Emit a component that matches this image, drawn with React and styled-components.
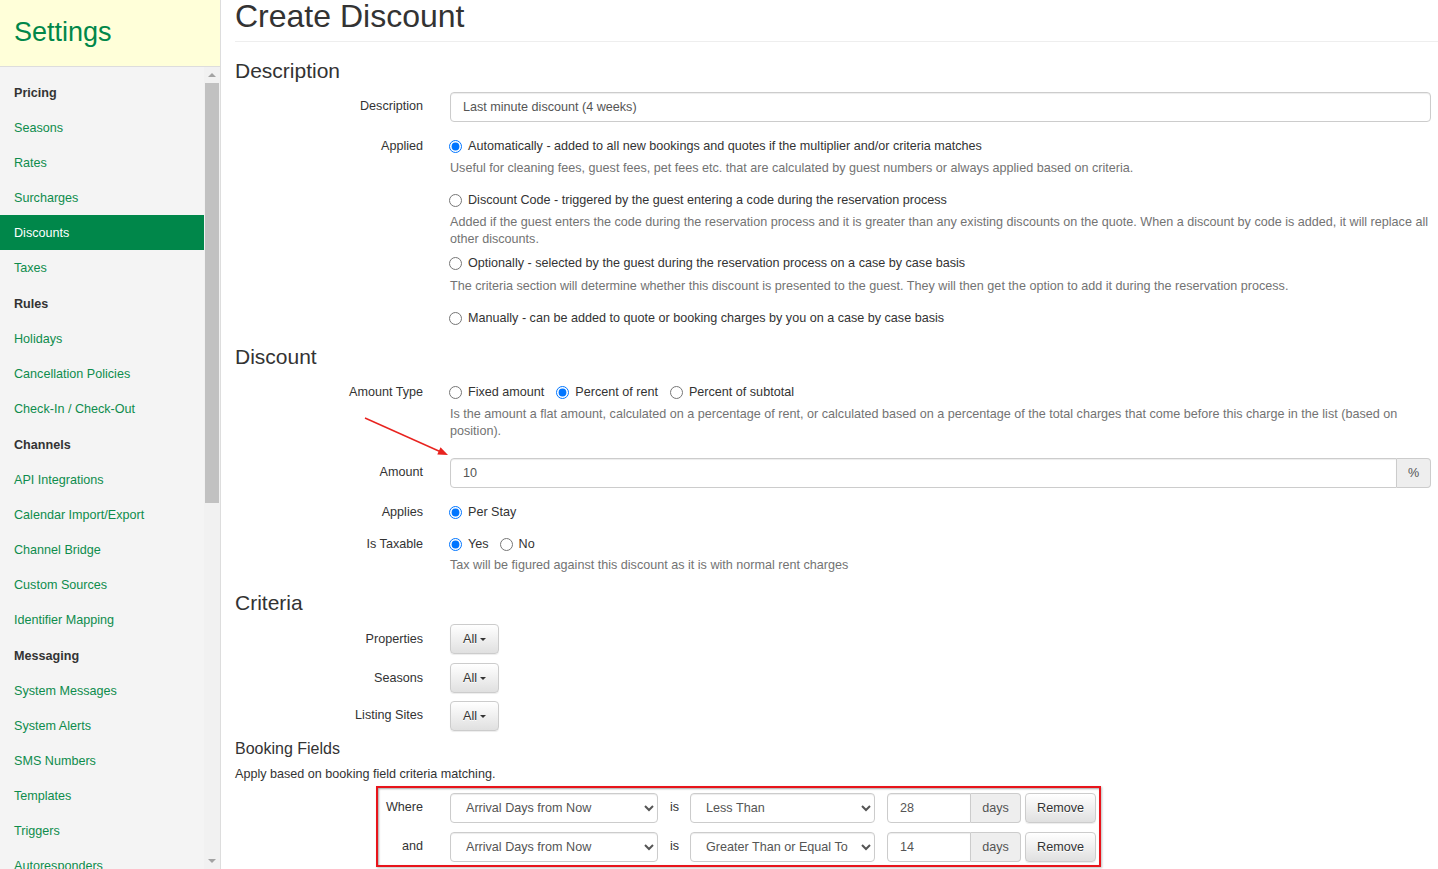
import React from 'react';
import styled, { createGlobalStyle } from 'styled-components';

const GlobalStyle = createGlobalStyle`
  html, body {
    margin: 0;
    padding: 0;
    height: 100%;
    overflow: hidden;
  }
  body {
    font-family: "Liberation Sans", Arial, Helvetica, sans-serif;
    font-size: 12.6px;
    color: #333;
    background: #fff;
  }
  * { box-sizing: border-box; }
`;

const navItems = [
  { label: 'Pricing', group: true },
  { label: 'Seasons' },
  { label: 'Rates' },
  { label: 'Surcharges' },
  { label: 'Discounts', active: true },
  { label: 'Taxes' },
  { label: 'Rules', group: true },
  { label: 'Holidays' },
  { label: 'Cancellation Policies' },
  { label: 'Check-In / Check-Out' },
  { label: 'Channels', group: true },
  { label: 'API Integrations' },
  { label: 'Calendar Import/Export' },
  { label: 'Channel Bridge' },
  { label: 'Custom Sources' },
  { label: 'Identifier Mapping' },
  { label: 'Messaging', group: true },
  { label: 'System Messages' },
  { label: 'System Alerts' },
  { label: 'SMS Numbers' },
  { label: 'Templates' },
  { label: 'Triggers' },
  { label: 'Autoresponders' }
];

const bookingRows = [
  { label: 'Where', field: 'Arrival Days from Now', op: 'Less Than', value: '28' },
  { label: 'and', field: 'Arrival Days from Now', op: 'Greater Than or Equal To', value: '14' }
];

const Layout = styled.div`
  display: flex;
  height: 100vh;
  overflow: hidden;
`;

const Sidebar = styled.aside`
  width: 221px;
  flex-shrink: 0;
  display: flex;
  flex-direction: column;
  background: #f4f4f4;
  border-right: 1px solid #ddd;
`;

const SidebarHeader = styled.div`
  height: 67px;
  flex-shrink: 0;
  display: flex;
  align-items: center;
  padding: 0 0 2px 14px;
  background: #ffffd9;
  border-bottom: 1px solid #ddd;
`;

const SidebarTitle = styled.h1`
  margin: 0;
  font-size: 27px;
  font-weight: 400;
  line-height: 1;
  color: #00874a;
`;

const SidebarBody = styled.div`
  flex: 1;
  min-height: 0;
  display: flex;
`;

const NavList = styled.nav`
  width: 204px;
  padding-top: 8px;
  overflow: hidden;
`;

const NavItem = styled.div`
  height: 35px;
  display: flex;
  align-items: center;
  padding-left: 14px;
  white-space: nowrap;
  margin-top: ${p => (p.$group && !p.$first ? 1 : 0)}px;
  font-weight: ${p => (p.$group ? 700 : 400)};
  color: ${p => (p.$active ? '#fff' : p.$group ? '#333' : '#0e8c4c')};
  background: ${p => (p.$active ? '#00874a' : 'transparent')};
`;

const ScrollTrack = styled.div`
  width: 16px;
  display: flex;
  flex-direction: column;
  background: #f1f1f1;
`;

const ScrollArrow = styled.div`
  height: 16px;
  display: flex;
  align-items: center;
  justify-content: center;

  &::before {
    content: '';
    border-left: 4px solid transparent;
    border-right: 4px solid transparent;
    ${p => (p.$down ? 'border-top: 4px solid #a3a3a3;' : 'border-bottom: 4px solid #a3a3a3;')}
  }
`;

const ScrollThumb = styled.div`
  height: 420px;
  margin: 0 1px;
  background: #c1c1c1;
`;

const ScrollSpacer = styled.div`
  flex: 1;
`;

const Main = styled.main`
  flex: 1;
  position: relative;
  padding: 0 7px 0 14px;
  overflow: hidden;
`;

const PageTitle = styled.h1`
  margin: -2px 0 0;
  font-size: 32px;
  font-weight: 400;
  line-height: 36px;
  color: #333;
`;

const Rule = styled.hr`
  margin: 7px -7px 0 0;
  border: 0;
  border-top: 1px solid #eee;
`;

const SectionTitle = styled.h3`
  margin: ${p => p.$mt}px 0 0;
  font-size: 21px;
  font-weight: 400;
  line-height: 24px;
  color: #333;
`;

const SubTitle = styled.h4`
  margin: ${p => p.$mt}px 0 0;
  font-size: 16px;
  font-weight: 400;
  line-height: 20px;
  color: #333;
`;

const Paragraph = styled.p`
  margin: ${p => p.$mt}px 0 0;
  line-height: 18px;
`;

const FormRow = styled.div`
  display: grid;
  grid-template-columns: 188px 1fr;
  column-gap: 27px;
  margin-top: ${p => p.$mt}px;
`;

const Label = styled.div`
  text-align: right;
  line-height: 18px;
  padding-top: ${p => p.$pt || 0}px;
  color: #333;
`;

const Controls = styled.div`
  display: flex;
  flex-direction: column;
  align-items: flex-start;
`;

const Option = styled.label`
  display: flex;
  align-items: center;
  line-height: 18px;
  margin-top: ${p => p.$mt || 0}px;
  color: #333;
`;

const Radio = styled.input.attrs({ type: 'radio' })`
  width: 13px;
  height: 13px;
  margin: 1px 6px 0 -1px;
`;

const InlineOptions = styled.div`
  display: flex;
  gap: ${p => p.$gap || 12}px;
`;

const Help = styled.div`
  margin-top: ${p => p.$mt || 0}px;
  line-height: 17px;
  color: #737373;
`;

const InputGroup = styled.div`
  display: flex;
  width: ${p => p.$width || '100%'};
`;

const TextInput = styled.input`
  flex: 1;
  min-width: 0;
  width: 100%;
  height: 30px;
  padding: 0 12px;
  font-family: inherit;
  font-size: 12.6px;
  color: #555;
  background: #fff;
  border: 1px solid #ccc;
  border-radius: ${p => (p.$joined ? '4px 0 0 4px' : '4px')};
  box-shadow: inset 0 1px 1px rgba(0, 0, 0, 0.075);
  outline: none;
`;

const Addon = styled.span`
  width: ${p => p.$width}px;
  height: 30px;
  display: flex;
  align-items: center;
  justify-content: center;
  color: #555;
  background: #eee;
  border: 1px solid #ccc;
  border-left: 0;
  border-radius: 0 4px 4px 0;
`;

const Button = styled.button`
  height: 30px;
  display: inline-flex;
  align-items: center;
  justify-content: center;
  padding: 0 12px;
  font-family: inherit;
  font-size: 12.6px;
  color: #333;
  text-shadow: 0 1px 0 #fff;
  background: linear-gradient(#fff 0%, #e0e0e0 100%);
  border: 1px solid #ccc;
  border-radius: 4px;
  box-shadow: inset 0 1px 0 rgba(255, 255, 255, 0.15), 0 1px 1px rgba(0, 0, 0, 0.075);
  width: ${p => (p.$width ? `${p.$width}px` : 'auto')};
`;

const Caret = styled.span`
  display: inline-block;
  margin-left: 3px;
  border-top: 3px solid #333;
  border-left: 3.5px solid transparent;
  border-right: 3.5px solid transparent;
`;

const BookingBox = styled.div`
  margin: 3px 0 0 141px;
  width: 725px;
  padding: 5px 3px 3px 6px;
  border: 2px solid #e8141b;
  box-shadow: inset 1px 1px 2px rgba(0, 0, 0, 0.35), 1px 1px 2px rgba(0, 0, 0, 0.25);
`;

const BookingRow = styled.div`
  display: flex;
  align-items: center;
  margin-top: ${p => p.$mt || 0}px;
`;

const BookingLabel = styled.div`
  width: 39px;
  margin-right: 27px;
  text-align: right;
  white-space: nowrap;
  line-height: 18px;
  padding-bottom: 2px;
`;

const Select = styled.select`
  width: ${p => p.$width}px;
  height: 30px;
  padding: 0 6px 0 11px;
  font-family: inherit;
  font-size: 12.6px;
  color: #555;
  background: #fff;
  border: 1px solid #ccc;
  border-radius: 4px;
  box-shadow: inset 0 1px 1px rgba(0, 0, 0, 0.075);
`;

const IsText = styled.span`
  margin: 0 11px 2px 12px;
`;

const Spacer = styled.div`
  width: ${p => p.$w}px;
  flex-shrink: 0;
`;

const Arrow = styled.svg`
  position: absolute;
  left: 0;
  top: 0;
  pointer-events: none;
`;

const SettingsNav = () => (
  <Sidebar>
    <SidebarHeader>
      <SidebarTitle>Settings</SidebarTitle>
    </SidebarHeader>
    <SidebarBody>
      <NavList>
        {navItems.map((item, i) => (
          <NavItem key={item.label} $group={item.group} $first={i === 0} $active={item.active}>
            {item.label}
          </NavItem>
        ))}
      </NavList>
      <ScrollTrack>
        <ScrollArrow />
        <ScrollThumb />
        <ScrollSpacer />
        <ScrollArrow $down />
      </ScrollTrack>
    </SidebarBody>
  </Sidebar>
);

const DropButton = () => (
  <Button type="button">
    All<Caret />
  </Button>
);

export default function App() {
  return (
    <>
      <GlobalStyle />
      <Layout>
        <SettingsNav />
        <Main>
          <PageTitle>Create Discount</PageTitle>
          <Rule />

          <SectionTitle $mt={17}>Description</SectionTitle>
          <FormRow $mt={9}>
            <Label $pt={5}>Description</Label>
            <InputGroup>
              <TextInput defaultValue="Last minute discount (4 weeks)" />
            </InputGroup>
          </FormRow>
          <FormRow $mt={15}>
            <Label>Applied</Label>
            <Controls>
              <Option>
                <Radio name="applied" defaultChecked />
                Automatically - added to all new bookings and quotes if the multiplier and/or criteria matches
              </Option>
              <Help $mt={5}>
                Useful for cleaning fees, guest fees, pet fees etc. that are calculated by guest numbers or always applied based on criteria.
              </Help>
              <Option $mt={14}>
                <Radio name="applied" />
                Discount Code - triggered by the guest entering a code during the reservation process
              </Option>
              <Help $mt={5}>
                Added if the guest enters the code during the reservation process and it is greater than any existing discounts on the quote. When a discount by code is added, it will replace all other discounts.
              </Help>
              <Option $mt={6}>
                <Radio name="applied" />
                Optionally - selected by the guest during the reservation process on a case by case basis
              </Option>
              <Help $mt={6}>
                The criteria section will determine whether this discount is presented to the guest. They will then get the option to add it during the reservation process.
              </Help>
              <Option $mt={14}>
                <Radio name="applied" />
                Manually - can be added to quote or booking charges by you on a case by case basis
              </Option>
            </Controls>
          </FormRow>

          <SectionTitle $mt={18}>Discount</SectionTitle>
          <FormRow $mt={14}>
            <Label>Amount Type</Label>
            <Controls>
              <InlineOptions $gap={13}>
                <Option>
                  <Radio name="type" />
                  Fixed amount
                </Option>
                <Option>
                  <Radio name="type" defaultChecked />
                  Percent of rent
                </Option>
                <Option>
                  <Radio name="type" />
                  Percent of subtotal
                </Option>
              </InlineOptions>
              <Help $mt={5}>
                Is the amount a flat amount, calculated on a percentage of rent, or calculated based on a percentage of the total charges that come before this charge in the list (based on position).
              </Help>
            </Controls>
          </FormRow>
          <FormRow $mt={18}>
            <Label $pt={5}>Amount</Label>
            <InputGroup>
              <TextInput $joined defaultValue="10" />
              <Addon $width={34}>%</Addon>
            </InputGroup>
          </FormRow>
          <FormRow $mt={15}>
            <Label>Applies</Label>
            <Controls>
              <Option>
                <Radio name="applies" defaultChecked />
                Per Stay
              </Option>
            </Controls>
          </FormRow>
          <FormRow $mt={14}>
            <Label>Is Taxable</Label>
            <Controls>
              <InlineOptions $gap={12}>
                <Option>
                  <Radio name="tax" defaultChecked />
                  Yes
                </Option>
                <Option>
                  <Radio name="tax" />
                  No
                </Option>
              </InlineOptions>
              <Help $mt={4}>Tax will be figured against this discount as it is with normal rent charges</Help>
            </Controls>
          </FormRow>

          <SectionTitle $mt={17}>Criteria</SectionTitle>
          <FormRow $mt={9}>
            <Label $pt={6}>Properties</Label>
            <Controls>
              <DropButton />
            </Controls>
          </FormRow>
          <FormRow $mt={9}>
            <Label $pt={6}>Seasons</Label>
            <Controls>
              <DropButton />
            </Controls>
          </FormRow>
          <FormRow $mt={8}>
            <Label $pt={5}>Listing Sites</Label>
            <Controls>
              <DropButton />
            </Controls>
          </FormRow>

          <SubTitle $mt={8}>Booking Fields</SubTitle>
          <Paragraph $mt={6}>Apply based on booking field criteria matching.</Paragraph>
          <BookingBox>
            {bookingRows.map((row, i) => (
              <BookingRow key={row.label} $mt={i ? 9 : 0}>
                <BookingLabel>{row.label}</BookingLabel>
                <Select $width={208} defaultValue={row.field}>
                  <option>Arrival Days from Now</option>
                  <option>Departure Days from Now</option>
                  <option>Nights</option>
                </Select>
                <IsText>is</IsText>
                <Select $width={185} defaultValue={row.op}>
                  <option>Less Than</option>
                  <option>Less Than or Equal To</option>
                  <option>Greater Than</option>
                  <option>Greater Than or Equal To</option>
                  <option>Equal To</option>
                </Select>
                <Spacer $w={12} />
                <InputGroup $width="134px">
                  <TextInput $joined defaultValue={row.value} />
                  <Addon $width={50}>days</Addon>
                </InputGroup>
                <Spacer $w={4} />
                <Button type="button" $width={71}>Remove</Button>
              </BookingRow>
            ))}
          </BookingBox>

          <Arrow width="260" height="470" viewBox="0 0 260 470">
            <line x1="144" y1="418" x2="220" y2="452" stroke="#e8231f" strokeWidth="1.4" />
            <polygon points="227,455 216.3,454.6 219.5,447.2" fill="#e8231f" />
          </Arrow>
        </Main>
      </Layout>
    </>
  );
}
